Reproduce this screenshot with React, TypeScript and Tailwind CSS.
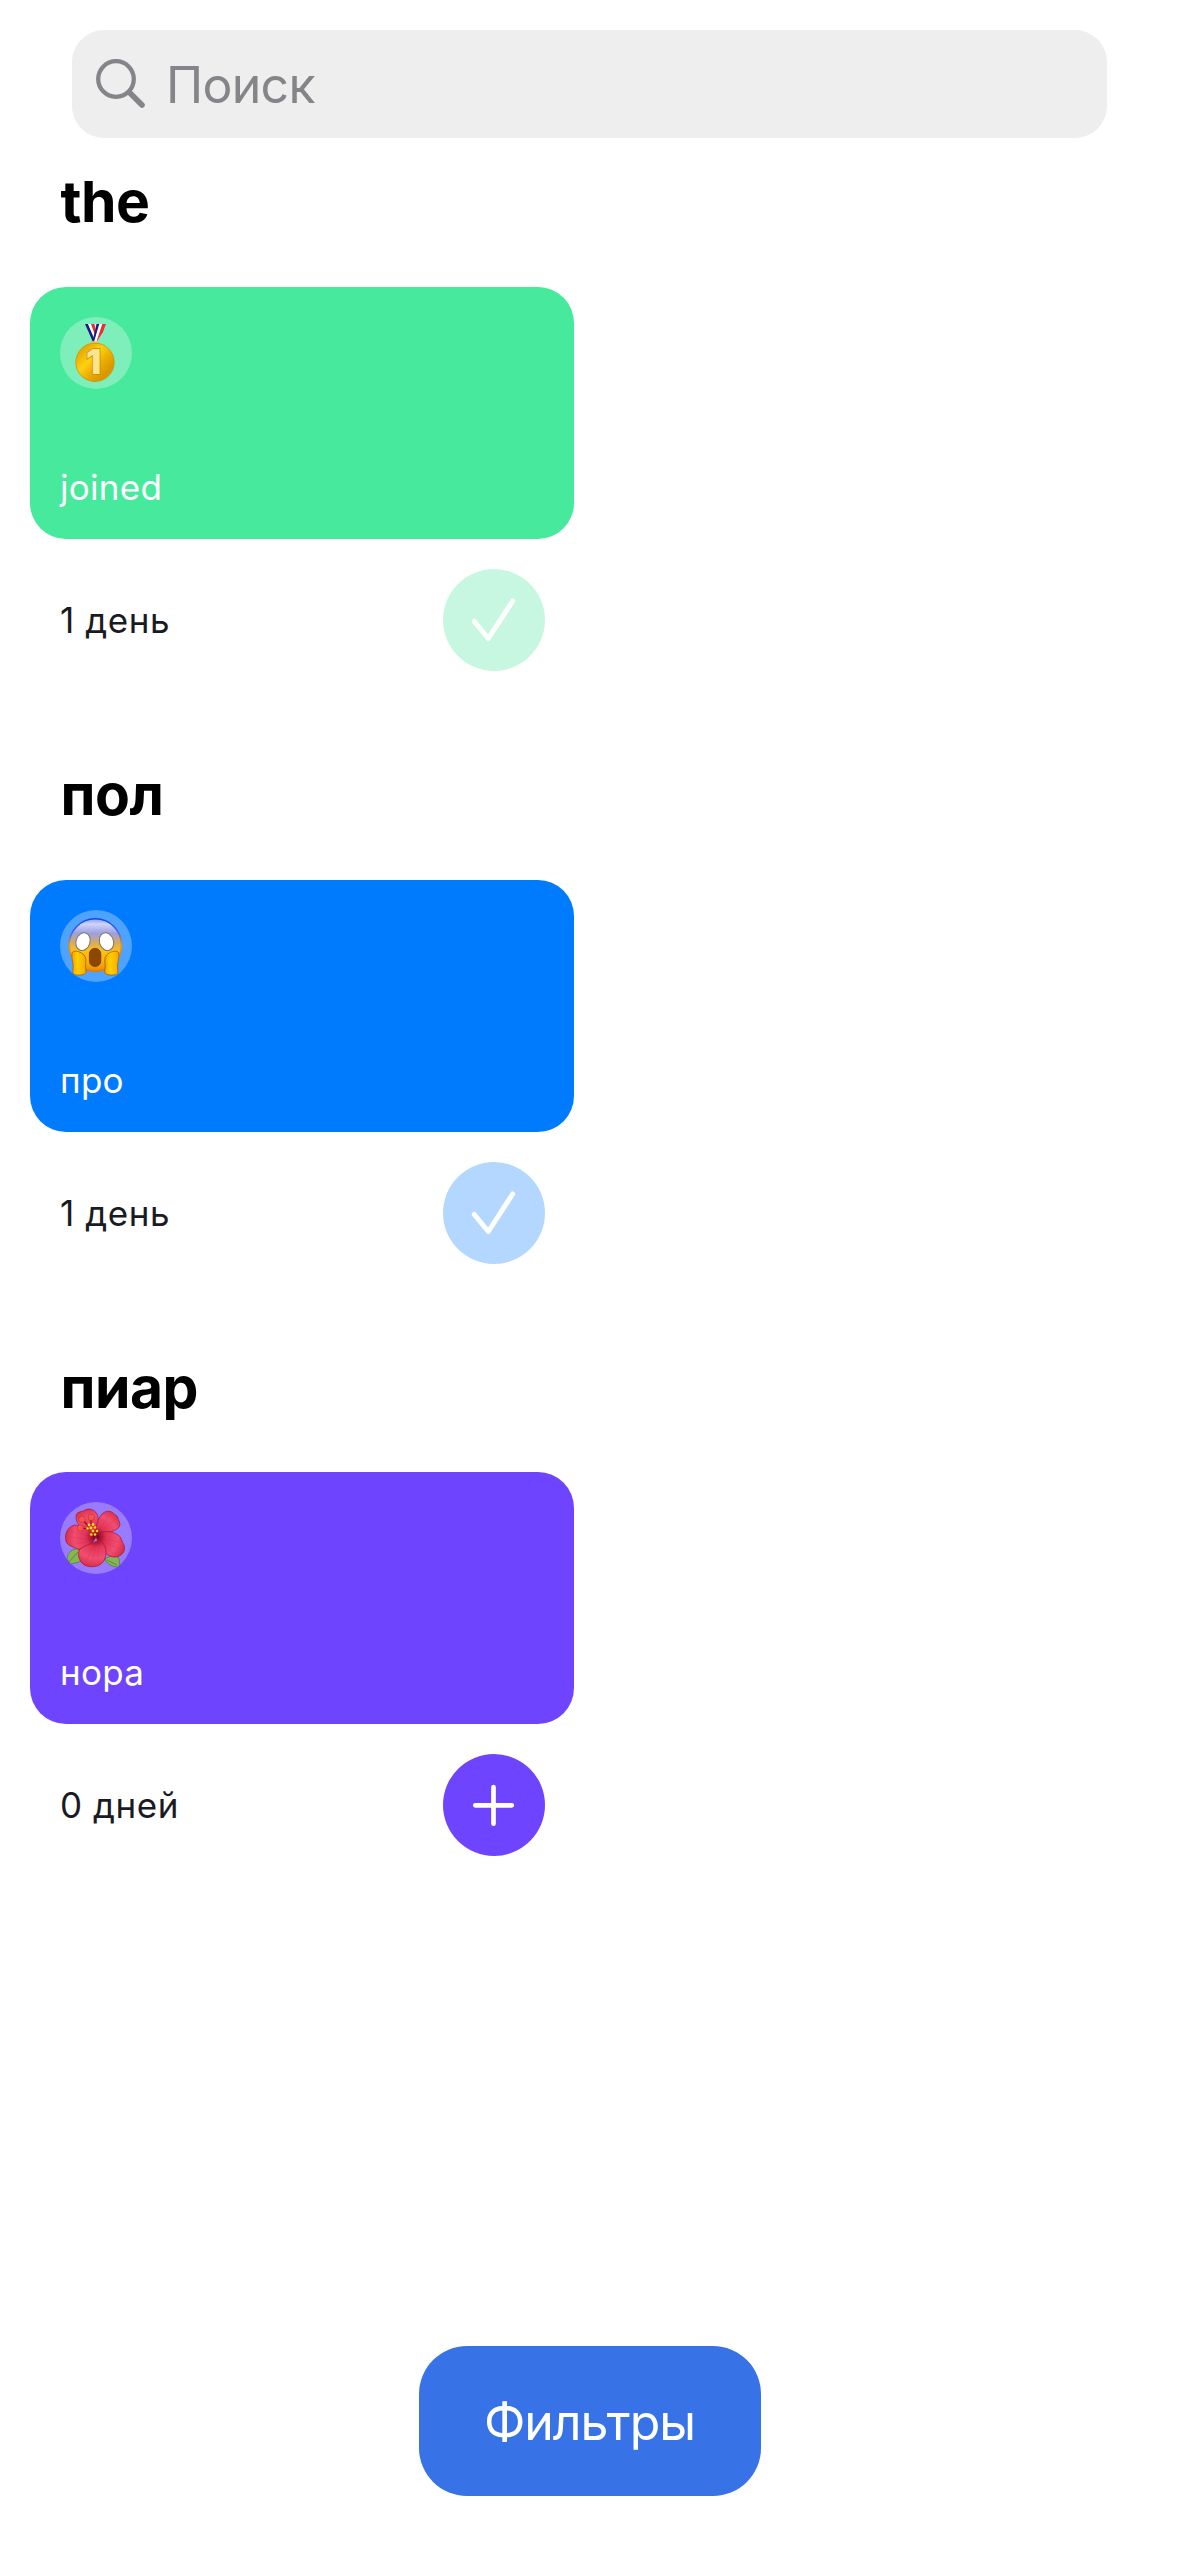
import type { ReactNode } from "react";

function Medal() {
  return (
    <svg viewBox="0 0 72 72" className="size-[72px]">
      <defs>
        <linearGradient id="gold" x1="0" y1="0" x2="1" y2="1">
          <stop offset="0" stopColor="#d18f00" />
          <stop offset="0.4" stopColor="#ffd010" />
          <stop offset="0.6" stopColor="#eaac02" />
          <stop offset="0.8" stopColor="#d99500" />
          <stop offset="1" stopColor="#f0b50c" />
        </linearGradient>
      </defs>
      <path d="M31 7h4l3.500 13-2 5z" fill="#f02a30" />
      <path d="M34.500 7h2.500l1.500 9-2 3z" fill="#fff" />
      <path d="M25 7h3.200l7 16-2 2.500z" fill="#1b1b84" />
      <path d="M28 7h2.800l4.600 12-.6 4z" fill="#fff" />
      <path d="M36.500 7h3l-5 17.500-2 0z" fill="#1b1b84" />
      <path d="M39.300 7h3.200L36.500 25h-2.500z" fill="#fff" />
      <path d="M42.300 7h3.600L43 15l-6.500 10z" fill="#f02a30" />
      <ellipse cx="34.300" cy="25.500" rx="3.300" ry="1.500" fill="#e9c85c" />
      <circle cx="35" cy="45.300" r="19.200" fill="url(#gold)" stroke="#cf9208" strokeWidth="0.800" />
      <text x="33.600" y="57" textAnchor="middle" fontSize="33.500" fontWeight="900" fill="#fae58e" stroke="#c98d10" strokeWidth="1.600" paintOrder="stroke" className="font-['Inter',sans-serif]">
        1
      </text>
    </svg>
  );
}

function Scream() {
  return (
    <svg viewBox="0 0 72 72" className="size-[72px]">
      <defs>
        <linearGradient id="face" x1="0" y1="0" x2="0" y2="1">
          <stop offset="0" stopColor="#8f9bf5" />
          <stop offset="0.1" stopColor="#d0d3fa" />
          <stop offset="0.28" stopColor="#9c9fe0" />
          <stop offset="0.46" stopColor="#d8ab5c" />
          <stop offset="0.62" stopColor="#ffc010" />
          <stop offset="0.8" stopColor="#fdb60c" />
          <stop offset="1" stopColor="#ea8806" />
        </linearGradient>
        <linearGradient id="rim" x1="0" y1="0" x2="0" y2="1">
          <stop offset="0" stopColor="#0b49ef" />
          <stop offset="0.25" stopColor="#3c68dc" />
          <stop offset="0.5" stopColor="#dc9426" />
          <stop offset="1" stopColor="#e27c06" />
        </linearGradient>
        <linearGradient id="hand" x1="0" y1="0" x2="1" y2="0">
          <stop offset="0" stopColor="#efa405" />
          <stop offset="0.4" stopColor="#ffcf00" />
          <stop offset="1" stopColor="#f4a900" />
        </linearGradient>
      </defs>
      <circle cx="35.300" cy="35" r="26.200" fill="url(#face)" stroke="url(#rim)" strokeWidth="1.600" />
      <g fill="#fff" stroke="#77736a" strokeWidth="1">
        <ellipse cx="23" cy="31.700" rx="7" ry="9" transform="rotate(18 23 31.700)" />
        <ellipse cx="46.500" cy="31.700" rx="7" ry="9" transform="rotate(-18 46.500 31.700)" />
      </g>
      <rect x="29.400" y="38.400" width="11.400" height="18" rx="5.500" fill="#8c4700" stroke="#7a3c00" strokeWidth="0.900" />
      <g fill="url(#hand)" stroke="#b96504" strokeWidth="0.900">
        <path d="M12.500 42c2.500-2 9 0 11.500 3 2.500 3 2 7 1.500 9.500-.5 3 1.300 6 .3 8.500-1.500 2.500-10.500 2.500-12.500 1-1.300-2 .5-6-.3-10C12.300 50 11 44.500 12.500 42z" />
        <path d="M58.200 42c-2.500-2-9 0-11.500 3-2.500 3-2 7-1.500 9.500.5 3-1.300 6-.3 8.500 1.500 2.500 10.500 2.500 12.500 1 1.300-2-.5-6 .3-10 .7-4 2-9.500.5-12z" />
      </g>
    </svg>
  );
}

function Hibiscus() {
  return (
    <svg viewBox="0 0 72 72" className="size-[72px]">
      <defs>
        <radialGradient id="petal" gradientUnits="userSpaceOnUse" cx="36" cy="35" r="31">
          <stop offset="0" stopColor="#6d0010" />
          <stop offset="0.14" stopColor="#a81130" />
          <stop offset="0.34" stopColor="#e03458" />
          <stop offset="0.7" stopColor="#f04e70" />
          <stop offset="1" stopColor="#d62c48" />
        </radialGradient>
      </defs>
      <g fill="#86b554" stroke="#477c26" strokeWidth="0.700">
        <path d="M19 47c-6-1-11 3-12 10l3 5c4-1 8-1 11-3z" />
        <path d="M45 57c4-3 9-4 13-2 2 3 1.500 7 1 10-5 0-12-2-14-8z" />
        <path d="M18 50L9 60M47 58l10 5" fill="none" />
      </g>
      <g fill="url(#petal)" stroke="#a51532" strokeWidth="0.700">
        <path d="M38 36C28 30 14 24 16.300 13 17.500 9 23 10 25 8c4-2 9-1 12 4 2 4 2 12 1 24z" />
        <path d="M36 36c-1-9 1-18 6-24 3-3 8-4 11-1 2 2 4 2 5 5 0 2 2 4 2 7-1 6-14 8-24 13z" />
        <path d="M36 35C31 30 23 24 15 23 8 24 4 32 6 39c1 4 5 5 9 7 6 3 15 1 21-11z" />
        <path d="M36 33c5-5 17-4 22 0 4 2 3 6 6 10 2 6-2 11-8 12-9 1-18-10-20-22z" />
        <path d="M40 38c-7 3-15 5-20 9-3 4-1 10 1 13 4 6 15 6 20 2 4-3 5-8 5-12 0-4-2-9-6-12z" />
      </g>
      <g fill="none" stroke="#c02444" strokeWidth="0.400" opacity="0.450">
        <path d="M34 31L21 13M35 29L29 10M38 30L49 13M40 30l16-13M30 34L10 29M29 37L9 35M31 39L15 42M42 37l17 3M41 39l19 8M40 41l14 11M35 41l-9 18M36 42l-4 19M38 42v18" />
      </g>
      <g stroke="#8e0b20" strokeWidth="1.200">
        <path d="M29 25L22 17M31 24V15M29 27l-8-1" />
      </g>
      <g fill="#f4564f" stroke="#c2202c" strokeWidth="0.500">
        <circle cx="22" cy="17.300" r="3.200" />
        <circle cx="31.300" cy="15.300" r="3.200" />
        <circle cx="20.200" cy="26" r="3.200" />
      </g>
      <g fill="#ffe000">
        <circle cx="29" cy="23" r="1.400" />
        <circle cx="33" cy="22.500" r="1.400" />
        <circle cx="27.500" cy="26.500" r="1.200" />
        <circle cx="31" cy="26" r="1.400" />
        <circle cx="35" cy="25.500" r="1.300" />
        <circle cx="37" cy="29" r="1.300" />
        <circle cx="33" cy="29" r="1.400" />
        <circle cx="31.300" cy="32.500" r="1.300" />
        <circle cx="35" cy="32.500" r="1.300" />
      </g>
    </svg>
  );
}

function Check() {
  return (
    <svg viewBox="0 0 102 102" className="size-[102px]" fill="none" stroke="#fff" strokeWidth="5" strokeLinecap="round" strokeLinejoin="round">
      <path d="M31.300 52.500l14 17L69.700 32" />
    </svg>
  );
}

function Plus() {
  return (
    <svg viewBox="0 0 102 102" className="size-[102px]" fill="none" stroke="#fff" strokeWidth="4.700" strokeLinecap="round">
      <path d="M32.300 51.300h36.500M50.500 33.200v36.500" />
    </svg>
  );
}

type TrackerProps = {
  category: string;
  title: string;
  days: string;
  emoji: ReactNode;
  cardColor: string;
  buttonColor: string;
  done: boolean;
};

const trackers: TrackerProps[] = [
  { category: "the", title: "joined", days: "1 день", emoji: <Medal />, cardColor: "bg-[#47e99d]", buttonColor: "bg-[#c8f7e1]", done: true },
  { category: "пол", title: "про", days: "1 день", emoji: <Scream />, cardColor: "bg-[#007bfe]", buttonColor: "bg-[#b3d7ff]", done: true },
  { category: "пиар", title: "нора", days: "0 дней", emoji: <Hibiscus />, cardColor: "bg-[#6e44fe]", buttonColor: "bg-[#6e44fe]", done: false },
];

function Tracker({ category, title, days, emoji, cardColor, buttonColor, done }: TrackerProps) {
  return (
    <section className="h-[592.67px] w-[544.4px]">
      <div className="h-[149px] pt-[30.4px] pl-[30.5px]">
        <h2 className="text-[57px] leading-[68px] font-bold tracking-[-0.5px] text-black">{category}</h2>
      </div>
      <div className={`flex h-[252px] flex-col justify-between rounded-[36px] p-[30px] ${cardColor}`}>
        <div className="size-[72px] overflow-hidden rounded-full bg-white/30">{emoji}</div>
        <p className="text-[35px] leading-[44px] tracking-[0.3px] text-white">{title}</p>
      </div>
      <div className="flex items-center justify-between pt-[30px] pr-[29.5px] pl-[30px]">
        <span className="text-[35px] leading-[44px] tracking-[0.55px] text-[#1a1b22]">{days}</span>
        <button className={`size-[102px] rounded-full ${buttonColor}`}>{done ? <Check /> : <Plus />}</button>
      </div>
    </section>
  );
}

export default function App() {
  return (
    <main className="flex h-[2556px] w-[1179px] flex-col bg-white pt-[30px] pb-[60px] font-['Inter',sans-serif]">
      <div className="mx-[72px] flex h-[108px] shrink-0 items-center rounded-[32px] bg-[#eeeeee] pl-[24px]">
        <svg viewBox="0 0 50 50" className="mt-[-1px] size-[50px]" fill="none" stroke="#858489" strokeLinecap="round">
          <circle cx="20" cy="20" r="17.800" strokeWidth="4.300" />
          <path d="M33.500 33.500L46 46" strokeWidth="5.600" />
        </svg>
        <span className="mt-[2px] pl-[20px] text-[50px] leading-[60px] tracking-[-0.7px] text-[#858489]">Поиск</span>
      </div>
      <div className="flex grow flex-col pl-[30px]">
        {trackers.map((t) => (
          <Tracker key={t.category} {...t} />
        ))}
      </div>
      <button className="h-[150px] w-[342px] shrink-0 self-center rounded-[48px] bg-[#3772e7] pt-[2px] text-[50px] tracking-[-1px] text-white">Фильтры</button>
    </main>
  );
}
